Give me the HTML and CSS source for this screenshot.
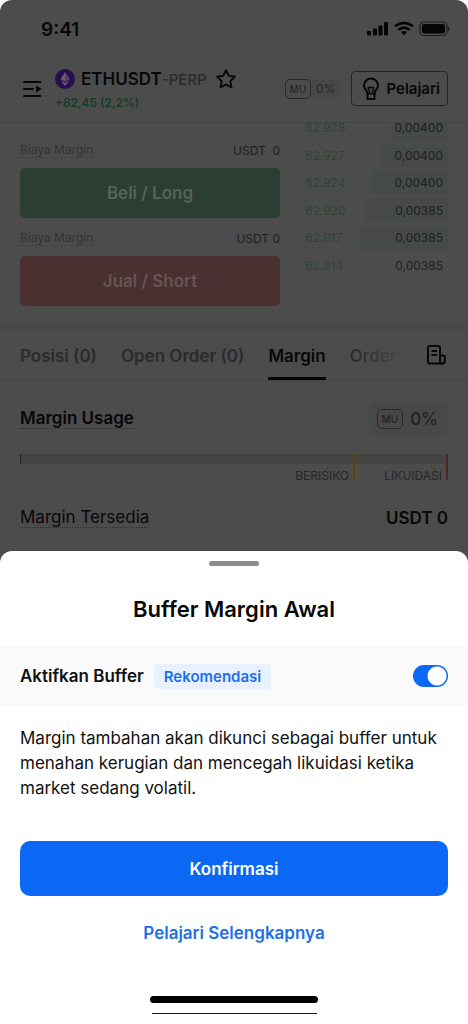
FILE: index.html
```html
<!DOCTYPE html>
<html lang="id">
<head>
<meta charset="utf-8">
<meta name="viewport" content="width=device-width, initial-scale=1">
<title>Buffer Margin Awal</title>
<link rel="stylesheet" href="styles.css">
</head>
<body>
<div class="app">
  <div class="screen">
    <header class="top">
      <div class="status">
        <span class="clock">9:41</span>
        <svg width="84" height="18" viewBox="0 0 84 18" fill="#050505" aria-hidden="true">
          <rect x="1" y="11" width="4" height="4.500" rx="1"/><rect x="7" y="8.500" width="4" height="7" rx="1"/><rect x="12.500" y="5.500" width="4" height="10" rx="1"/><rect x="18" y="2" width="4" height="13.500" rx="1"/>
          <g fill="none" stroke="#050505" stroke-width="2.500"><path d="M29 6.200Q38-.5 47 6.200"/><path d="M32.300 9.900Q38 5.300 43.700 9.900"/></g>
          <path d="M35 12Q38 9.800 41 12L38 15.200Z"/>
          <rect x="54" y="2" width="27" height="13.500" rx="4" fill="none" stroke="#1c1c1c" stroke-width="1.200"/>
          <rect x="56" y="4" width="23" height="9.500" rx="2"/>
          <path d="M82 6.500Q85 8.700 82 11Z" fill="#1c1c1c"/>
        </svg>
      </div>
      <div class="market">
        <button class="icon-button" aria-label="Daftar market">
          <svg width="20" height="18" viewBox="0 0 20 18" stroke="#070707" stroke-width="1.800" fill="none" stroke-linecap="round"><path d="M2 2H18.500M2 9H11M2 16H18.500"/><path d="M15 7L18 9L15 11Z" fill="#070707"/></svg>
        </button>
        <div class="pair">
          <div class="pair-row">
            <svg width="20" height="20" viewBox="0 0 20 20" aria-hidden="true"><circle cx="10" cy="10" r="10" fill="#2a0d4c"/><path d="M10 3L5.500 10.200L10 12.800L14.500 10.200Z" fill="#6a5c78"/><path d="M10 3V12.800L14.500 10.200Z" fill="#54436a"/><path d="M5.500 11.500L10 17L14.500 11.500L10 14Z" fill="#6a5c78"/></svg>
            <h1 class="symbol">ETHUSDT<span class="symbol-type">-PERP</span></h1>
            <button class="icon-button" aria-label="Favorit">
              <svg width="22" height="22" viewBox="0 0 22 22" fill="none" stroke="#090909" stroke-width="1.900" stroke-linejoin="round"><path d="M11 2L13.700 7.700L20 8.600L15.400 13L16.500 19.300L11 16.300L5.500 19.300L6.600 13L2 8.600L8.300 7.700Z"/></svg>
            </button>
          </div>
          <span class="change">+82,45 (2,2%)</span>
        </div>
        <div class="usage-small"><span class="mu">MU</span><span class="usage-small-value">0%</span></div>
        <button class="learn">
          <svg width="18" height="24" viewBox="0 0 18 24" fill="none" stroke="#080808" stroke-width="2" aria-hidden="true"><path d="M5.500 16.500C5.500 13.500 2 12.500 2 8.500A7 7 0 0 1 16 8.500C16 12.500 12.500 13.500 12.500 16.500Z"/><path d="M6 10L7.500 15M12 10L10.500 15M6 10.500H12" stroke-width="1.400"/><path d="M5.500 16V22H12.500V16"/></svg>
          Pelajari
        </button>
      </div>
    </header>

    <section class="trade">
      <div class="orders">
        <div class="fee"><span class="fee-label">Biaya Margin</span><span>USDT&nbsp; 0</span></div>
        <button class="order-button buy">Beli / Long</button>
        <div class="fee"><span class="fee-label">Biaya Margin</span><span>USDT 0</span></div>
        <button class="order-button sell">Jual / Short</button>
      </div>
      <div class="book">
        <div class="level"><span class="price">62.928</span><span class="depth" style="width:40%"></span><span class="amount">0,00400</span></div>
        <div class="level"><span class="price">62.927</span><span class="depth" style="width:47%"></span><span class="amount">0,00400</span></div>
        <div class="level"><span class="price">62.924</span><span class="depth" style="width:53%"></span><span class="amount">0,00400</span></div>
        <div class="level"><span class="price">62.920</span><span class="depth" style="width:58%"></span><span class="amount">0,00385</span></div>
        <div class="level"><span class="price">62.917</span><span class="depth" style="width:62%"></span><span class="amount">0,00385</span></div>
        <div class="level"><span class="price">62.914</span><span class="amount">0,00385</span></div>
      </div>
    </section>

    <nav class="tabs">
      <div class="tab-list">
        <button class="tab">Posisi (0)</button>
        <button class="tab">Open Order (0)</button>
        <button class="tab active">Margin</button>
        <button class="tab fading">Order</button>
      </div>
      <button class="icon-button" aria-label="Riwayat">
        <svg width="20" height="20" viewBox="0 0 20 20" fill="none" stroke="#090909" stroke-width="2" stroke-linejoin="round"><path d="M14 10V2.500Q14 1 12.500 1H3.500Q2 1 2 2.500V16.500Q2 18.500 4 18.500H16.500"/><path d="M14 10.500H17.500Q18.800 10.500 18.800 12V16.200A2.400 2.400 0 0 1 14 16.200Z"/><path d="M5.500 6H11M5.500 10H11"/></svg>
      </button>
    </nav>

    <section class="margin">
      <div class="margin-row">
        <h2 class="hint strong">Margin Usage</h2>
        <div class="usage"><span class="mu">MU</span><span>0%</span></div>
      </div>
      <div class="meter">
        <div class="zone safe"><span class="zone-label">BERISIKO</span></div>
        <div class="zone risk"><span class="zone-label">LIKUIDASI</span></div>
      </div>
      <div class="margin-row">
        <span class="hint">Margin Tersedia</span>
        <strong class="available">USDT 0</strong>
      </div>
    </section>
  </div>

  <main class="sheet" role="dialog" aria-labelledby="sheet-title">
    <div class="grabber"></div>
    <h2 class="sheet-title" id="sheet-title">Buffer Margin Awal</h2>
    <div class="setting">
      <label class="setting-label" for="buffer">Aktifkan Buffer</label>
      <span class="tag">Rekomendasi</span>
      <input class="switch" type="checkbox" role="switch" id="buffer" checked>
    </div>
    <p class="description">Margin tambahan akan dikunci sebagai buffer untuk menahan kerugian dan mencegah likuidasi ketika market sedang volatil.</p>
    <button class="confirm">Konfirmasi</button>
    <a class="more" href="#">Pelajari Selengkapnya</a>
    <div class="home-bar"></div>
    <div class="home-line"></div>
  </main>
</div>
</body>
</html>
```

FILE: styles.css
```css
* {
  box-sizing: border-box;
}

body {
  margin: 0;
  background: #fff;
  font-family: Inter, "Liberation Sans", sans-serif;
  font-size: 17px;
  color: #080808;
}

button {
  padding: 0;
  border: 0;
  background: none;
  color: inherit;
  font: inherit;
}

svg {
  display: block;
  flex: none;
}

h1,
h2,
p {
  margin: 0;
}

.app {
  display: flex;
  flex-direction: column;
  min-height: 100vh;
}

.screen {
  padding-bottom: 17px;
  border-radius: 12px 12px 0 0;
  background: #4c4c4c;
}

.icon-button {
  flex: none;
}

/* Header */
.top {
  padding: 16px 18px 0 20px;
  height: 123px;
  border-bottom: 1px solid #444;
}

.status {
  display: flex;
  justify-content: space-between;
  align-items: center;
  height: 26px;
  padding-left: 21px;
}

.clock {
  font-size: 19px;
  font-weight: 600;
}

.market {
  display: flex;
  align-items: center;
  padding: 24px 2px 0;
}

.pair {
  display: flex;
  flex-direction: column;
  gap: 4px;
  margin: 1px auto 0 13px;
}

.pair-row {
  display: flex;
  align-items: center;
  gap: 6px;
  height: 24px;
}

.symbol {
  margin-right: 2px;
  font-size: 17px;
  font-weight: 600;
  white-space: nowrap;
}

.symbol-type {
  color: #2b2b2b;
  font-size: 15px;
  font-weight: 500;
}

.change {
  color: #0c3c24;
  font-size: 12px;
  font-weight: 500;
  line-height: 16px;
}

.mu {
  display: inline-block;
  padding: 0 4px;
  border: 1px solid #292929;
  border-radius: 5px;
  font-size: 10px;
  font-weight: 500;
  line-height: 18px;
}

.usage-small {
  display: flex;
  align-items: center;
  color: #292929;
}

.usage-small-value {
  padding: 0 5px;
  background: #484848;
  font-size: 12px;
  line-height: 18px;
}

.learn {
  display: flex;
  align-items: center;
  gap: 6px;
  height: 35px;
  margin-left: 11px;
  padding: 0 7px 0 10px;
  border: 1px solid #252525;
  border-radius: 4px;
  font-size: 15px;
  font-weight: 600;
}

/* Order entry and order book */
.trade {
  display: grid;
  grid-template-columns: 260fr 143fr;
  gap: 25px;
  height: 207px;
  padding: 0 20px;
  border-bottom: 5px solid #484848;
  overflow: hidden;
}

.orders {
  display: flex;
  flex-direction: column;
  padding-top: 17px;
}

.fee {
  display: flex;
  justify-content: space-between;
  align-items: center;
  height: 20px;
  margin-bottom: 8px;
  color: #1e1e1e;
  font-size: 12px;
}

.fee-label {
  border-bottom: 1px dashed #404040;
  color: #343434;
  line-height: 15px;
}

.order-button {
  flex: none;
  height: 50px;
  margin-bottom: 10px;
  border-radius: 5px;
  color: #596258;
  font-size: 17px;
  font-weight: 600;
}

.buy {
  background: #2b3e34;
}

.sell {
  background: #4a3030;
  color: #655654;
}

.book {
  display: grid;
  grid-template-rows: repeat(6, 1fr);
  height: 165px;
  margin-top: -9px;
  font-size: 12px;
}

.level {
  display: grid;
  grid-template-columns: 1fr auto;
  align-items: center;
}

.price,
.depth,
.amount {
  grid-row: 1;
}

.price {
  grid-column: 1;
  color: #2c4639;
}

.depth {
  grid-column: 1 / -1;
  justify-self: end;
  height: 24px;
  background: #464a48;
}

.amount {
  z-index: 1;
  grid-column: 2;
  margin-right: 5px;
  color: #202020;
}

/* Tabs */
.tabs {
  display: flex;
  align-items: center;
  justify-content: space-between;
  height: 51px;
  padding: 0 22px 0 20px;
  border-bottom: 1px solid #444;
}

.tab-list {
  display: flex;
  gap: 24px;
  align-self: stretch;
}

.tab {
  border-bottom: 3px solid transparent;
  padding-top: 5px;
  color: #2b2b2b;
  font-weight: 600;
  white-space: nowrap;
}

.active {
  border-color: #080808;
  color: #080808;
}

.fading {
  background: linear-gradient(90deg, #2b2b2b, #444);
  -webkit-background-clip: text;
  background-clip: text;
  color: transparent;
}

/* Margin */
.margin {
  padding: 21px 20px 0;
}

.margin-row {
  display: flex;
  align-items: center;
  justify-content: space-between;
  height: 33px;
}

.hint {
  border-bottom: 1px dotted #303030;
  font-size: 17px;
  font-weight: 400;
  line-height: 20px;
}

.strong {
  font-weight: 600;
}

.usage {
  display: flex;
  align-items: center;
  gap: 7px;
  height: 33px;
  padding: 0 10px 0 8px;
  border-radius: 6px;
  background: #484848;
  color: #222;
  font-weight: 500;
}

.meter {
  display: flex;
  margin: 19px 0 21px;
  border-left: 1px solid #222;
  border-image: linear-gradient(#222 38%, transparent 38%) 1;
  border-width: 0 0 0 1px;
}

.zone {
  display: flex;
  align-items: flex-end;
  justify-content: flex-end;
  height: 26px;
  padding-right: 4px;
  background: linear-gradient(#434343 10px, transparent 10px);
  color: #272727;
  font-size: 12px;
}

.zone-label {
  line-height: 9px;
}

.safe {
  flex: 328;
  border-right: 2px solid #654108;
}

.risk {
  flex: 87;
  border-right: 2px solid #5b1f20;
}

.available {
  font-weight: 600;
}

/* Bottom sheet */
.sheet {
  display: flex;
  flex: 1;
  flex-direction: column;
  align-items: center;
  border-radius: 12px 12px 0 0;
  background: #fff;
  box-shadow: 0 -6px 0 6px #4c4c4c;
  clip-path: inset(-12px 0 0 0);
  color: #111;
}

.grabber {
  width: 50px;
  height: 5px;
  margin-top: 10px;
  border-radius: 3px;
  background: #8e8e8e;
}

.sheet-title {
  margin: 28px 0 21px;
  color: #080808;
  font-size: 22px;
  font-weight: 600;
  line-height: 31px;
}

.setting {
  display: flex;
  align-items: center;
  align-self: stretch;
  gap: 10px;
  height: 60px;
  padding: 0 20px;
  background: #fafafa;
}

.setting-label {
  font-weight: 600;
}

.tag {
  padding: 0 10px;
  border-radius: 4px;
  background: #e9f1ff;
  color: #1c70ed;
  font-size: 15px;
  font-weight: 600;
  line-height: 25px;
}

.switch {
  width: 35px;
  height: 22px;
  margin: 0 0 0 auto;
  border-radius: 11px;
  background: radial-gradient(circle at 11px 50%, #fff 9px, transparent 10px) #bbb;
  appearance: none;
}

.switch:checked {
  background: radial-gradient(circle at 24px 50%, #fff 9px, transparent 10px) #0b68f5;
}

.description {
  align-self: stretch;
  padding: 20px 20px 40px;
  line-height: 25px;
}

.confirm {
  align-self: stretch;
  height: 55px;
  margin: 0 20px;
  border-radius: 10px;
  background: #0b68f5;
  color: #fff;
  font-weight: 600;
}

.more {
  margin-top: 24px;
  color: #1c70ed;
  font-weight: 600;
  line-height: 26px;
  text-decoration: none;
}

.home-bar {
  width: 168px;
  height: 7px;
  margin-top: 50px;
  border-radius: 4px;
  background: #000;
}

.home-line {
  width: 165px;
  height: 1px;
  margin: 10px 0;
  background: #111;
}
```
